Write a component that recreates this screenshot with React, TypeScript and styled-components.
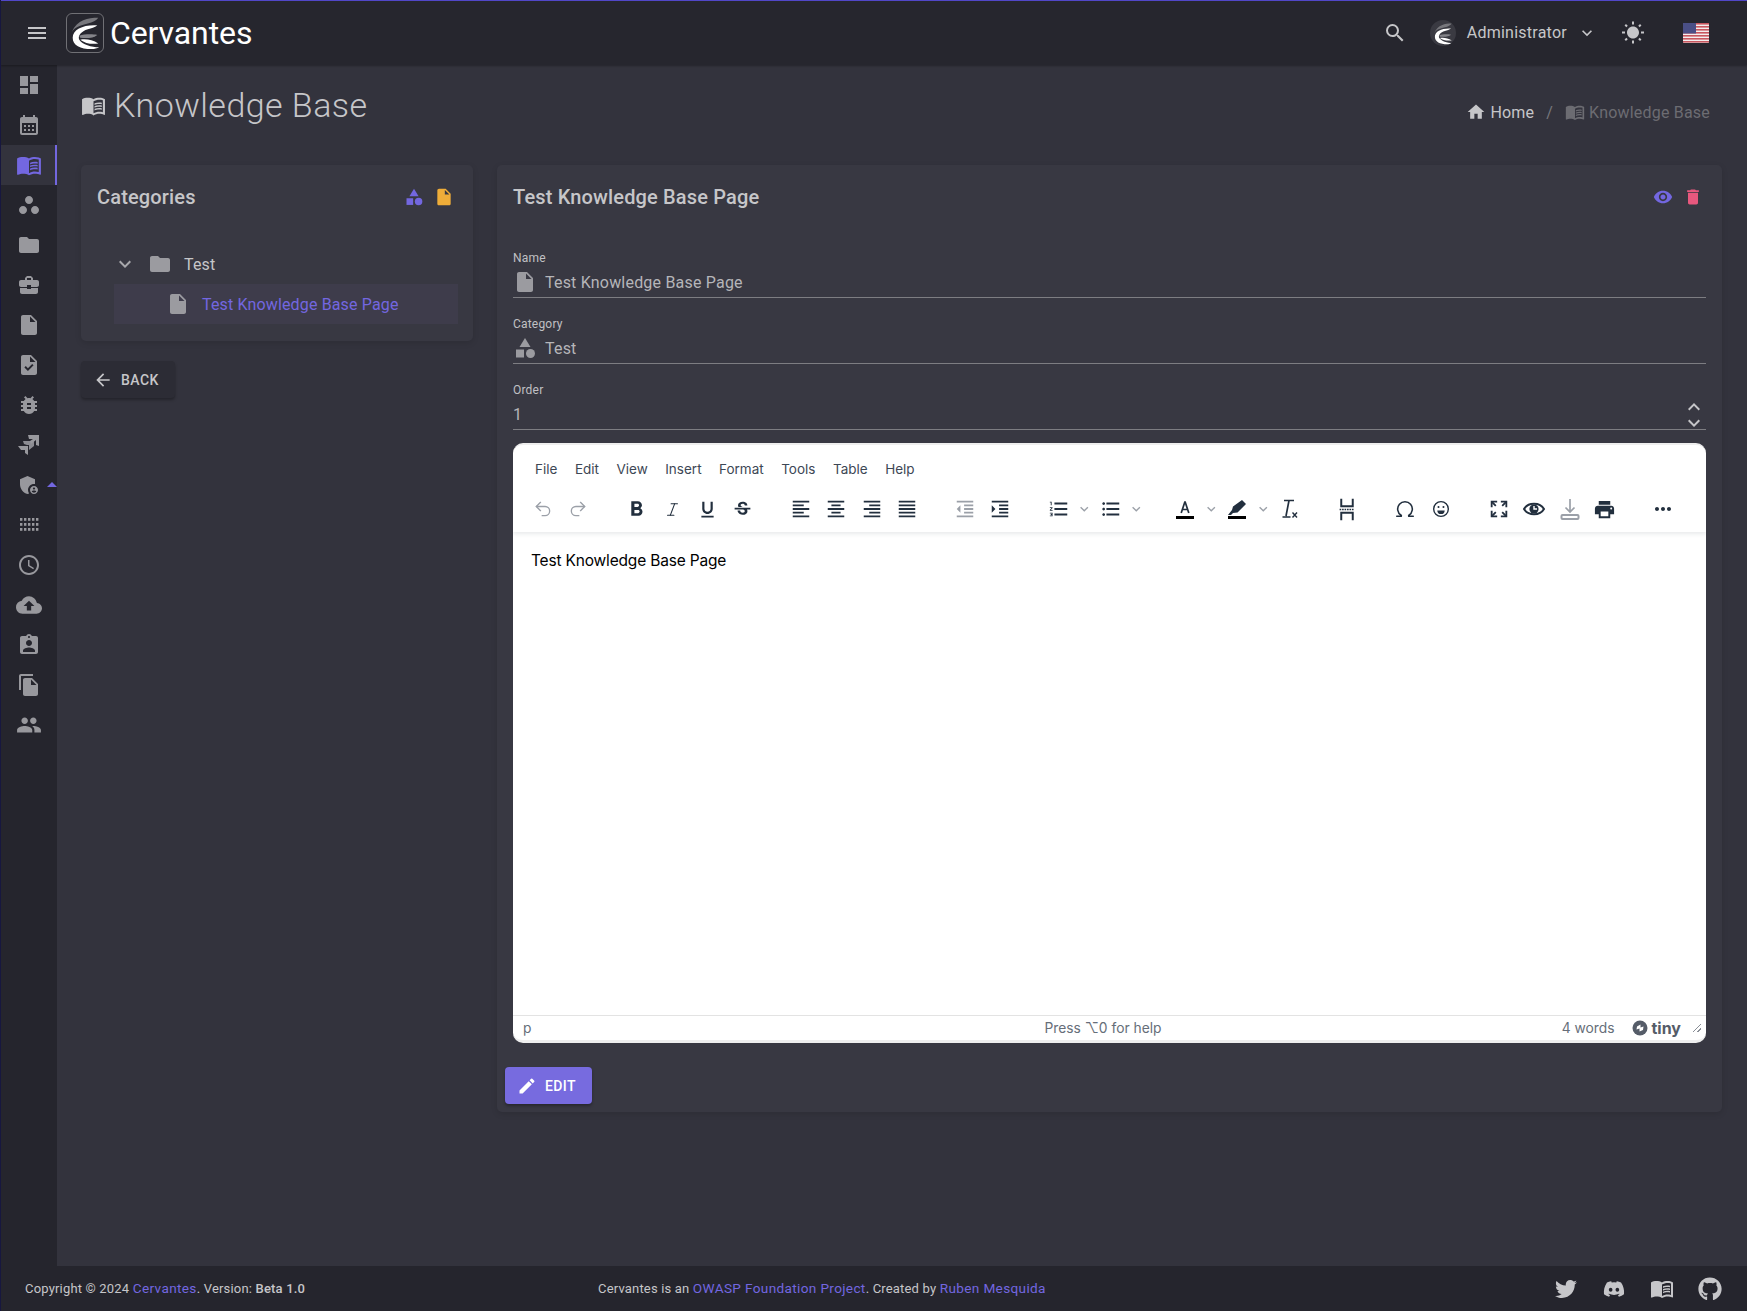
import React from "react";
import styled, { createGlobalStyle } from "styled-components";
import {
  MdAccessTime,
  MdAdminPanelSettings,
  MdArrowBack,
  MdAssignmentInd,
  MdBugReport,
  MdBusinessCenter,
  MdCalendarMonth,
  MdCategory,
  MdCloudUpload,
  MdDashboard,
  MdDelete,
  MdEdit,
  MdExpandMore,
  MdFileCopy,
  MdFolder,
  MdFormatAlignCenter,
  MdFormatAlignJustify,
  MdFormatAlignLeft,
  MdFormatAlignRight,
  MdFormatBold,
  MdFormatIndentDecrease,
  MdFormatIndentIncrease,
  MdFormatListBulleted,
  MdFormatListNumbered,
  MdFormatUnderlined,
  MdHome,
  MdInsertDriveFile,
  MdKeyboardArrowDown,
  MdKeyboardArrowUp,
  MdMenu,
  MdMenuBook,
  MdMoreHoriz,
  MdPeople,
  MdPrint,
  MdSearch,
  MdStrikethroughS,
  MdTask,
  MdVisibility,
  MdWbSunny,
  MdWorkspaces,
} from "react-icons/md";
import { FaDiscord, FaGithub, FaTwitter } from "react-icons/fa";
import { Italic, Omega, Redo2, Undo2 } from "lucide-react";

const GlobalStyle = createGlobalStyle`
  html, body {
    margin: 0;
    padding: 0;
    background: #33333d;
  }
  * {
    box-sizing: border-box;
  }
  p, h1, h2 {
    margin: 0;
    font-weight: inherit;
  }
`;

const PURPLE = "#7367e0";

const LogoMark = ({ width, height }: { width: number; height: number }) => (
  <svg width={width} height={height} viewBox="0 0 38 40">
    <path d="M33 4 C22 4 11 6 5 19 C8 14 14 12 22 10 C27 9 31 7 33 4Z" fill="#77777c" />
    <path d="M32 12 C18 11 6 16 6 25 C6 33 14 37 26 37 C29 37 32 36 34 35 C26 35 16 32 13 27 C11 23 15 18 22 16 C26 15 29 14 32 12Z" fill="#fff" />
    <path d="M13 23 C18 21 27 21 32 22 C28 25 22 26 14 25Z" fill="#85858a" />
    <path d="M14 27 C20 26 27 27 33 31 C26 32 19 31 14 27Z" fill="#fff" />
  </svg>
);

const StackedArrows = () => (
  <svg width="24" height="24" viewBox="0 0 24 24" fill="currentColor">
    <path d="M11 2h11v11l-3-1V7l-5 4-1-3 3-2h-4z" />
    <path d="M6 8h11v5l-5 4v-5h-2l-3-1z" opacity="0.9" />
    <path d="M1 13h10v9l-3-2v-3l-4 0z" />
  </svg>
);

const DotGrid = () => (
  <svg width="20" height="16" viewBox="0 0 20 16" fill="currentColor">
    {[1, 6, 11].map((y) =>
      [1, 5, 9, 13, 17].map((x) => <rect key={`${x}-${y}`} x={x} y={y} width="2.4" height="2.8" />)
    )}
  </svg>
);

const Flag = () => (
  <svg width="26" height="20" viewBox="0 0 26 20">
    <rect width="26" height="20" rx="1" fill="#f3eeee" />
    {[0, 3, 6, 9, 12, 15, 18].map((y) => (
      <rect key={y} y={y} width="26" height="1.6" fill="#c8575f" />
    ))}
    <rect width="13" height="10.5" fill="#4a4f86" />
  </svg>
);

const TextColorIcon = () => (
  <svg width="24" height="24" viewBox="0 0 24 24">
    <path d="M12 4.500 L8.200 16 M12 4.500 L15.800 16 M9.400 12.500 H14.600" fill="none" stroke="#222f3e" strokeWidth="1.700" />
    <rect x="3" y="19" width="18" height="3" fill="#000" />
  </svg>
);

const HighlightIcon = () => (
  <svg width="24" height="24" viewBox="0 0 24 24">
    <path d="M17 3l4 4-8.500 8.500L8 16l-2 2H3l4-5 1-3.500z" fill="#222f3e" />
    <rect x="3" y="19" width="18" height="3" fill="#000" />
  </svg>
);

const ClearFormatIcon = () => (
  <svg width="24" height="24" viewBox="0 0 24 24" fill="none" stroke="#222f3e">
    <path d="M7 3.500h10M12 3.500 L9 19M5.500 20h8" strokeWidth="1.700" />
    <path d="M15.500 15.500l4.500 5M20 15.500l-4.500 5" strokeWidth="1.400" />
  </svg>
);

const PageBreakIcon = () => (
  <svg width="20" height="23" viewBox="0 0 24 28" fill="none" stroke="#222f3e" strokeWidth="2.400">
    <path d="M5 1v9h14V1M5 27v-9h14v9" />
    <path d="M3 14h18" strokeWidth="1.600" strokeDasharray="2 1" />
  </svg>
);

const EmojiIcon = () => (
  <svg width="22" height="22" viewBox="0 0 24 24" fill="none" stroke="#222f3e" strokeWidth="1.500">
    <circle cx="12" cy="12" r="8" />
    <circle cx="9.300" cy="9.800" r="1.100" fill="#222f3e" stroke="none" />
    <circle cx="14.700" cy="9.800" r="1.100" fill="#222f3e" stroke="none" />
    <path d="M8 13.500h8a4 4 0 0 1-8 0z" fill="#222f3e" stroke="none" />
  </svg>
);

const PreviewIcon = () => (
  <svg width="24" height="24" viewBox="0 0 24 24">
    <path d="M2 12 C6 5 18 5 22 12 C18 19 6 19 2 12Z" fill="none" stroke="#222f3e" strokeWidth="2" />
    <circle cx="12" cy="12" r="4.600" fill="#222f3e" />
    <path d="M12 9v3h3" stroke="#fff" strokeWidth="1.400" fill="none" />
  </svg>
);

const SaveIcon = () => (
  <svg width="24" height="24" viewBox="0 0 24 24" fill="none" stroke="#9ba0a8">
    <path d="M12 2v13M7.500 10.500 12 15l4.500-4.500" strokeWidth="1.700" />
    <rect x="3.500" y="18" width="17" height="4" rx="1" strokeWidth="2" />
  </svg>
);

const FullscreenIcon = () => (
  <svg width="22" height="22" viewBox="0 0 24 24" fill="none" stroke="#222f3e" strokeWidth="2">
    <path d="M4 10V4h6M20 10V4h-6M4 14v6h6M20 14v6h-6" />
    <path d="M4.500 4.500l4 4M19.500 4.500l-4 4M4.500 19.500l4-4M19.500 19.500l-4-4" />
  </svg>
);

const TinyLogo = () => (
  <svg width="16" height="16" viewBox="0 0 16 16">
    <circle cx="8" cy="8" r="7.500" fill="#555c68" />
    <path d="M5 6.500 8.500 4.500v3l3-1-.5 3.500-3.500 1.500v-3l-3 1z" fill="#fff" />
  </svg>
);

const Page = styled.div`
  width: 1747px;
  height: 1311px;
  display: flex;
  flex-direction: column;
  background: #33333d;
  border-left: 1px solid #17173f;
  font-family: Roboto, "Liberation Sans", sans-serif;
  color: #c6c6c9;
  overflow: hidden;
`;

const TopBar = styled.header`
  height: 65px;
  flex: none;
  display: flex;
  align-items: center;
  background: #26262e;
  border-top: 1px solid #5147c9;
  padding: 0 38px 0 24px;
  box-shadow: 0 1px 2px rgba(0, 0, 0, 0.3);
  position: relative;
  z-index: 2;
`;

const Burger = styled.div`
  display: flex;
  color: #c6c6c9;
  margin-right: 17px;
`;

const LogoBox = styled.div`
  width: 38px;
  height: 40px;
  display: flex;
  align-items: center;
  justify-content: center;
  border: 1px solid #707075;
  border-radius: 6px;
  margin-right: 6px;
`;

const Brand = styled.span`
  font-size: 32px;
  color: #fff;
  letter-spacing: -0.1px;
`;

const TopActions = styled.div`
  margin-left: auto;
  display: flex;
  align-items: center;
  color: #c6c6c9;
`;

const Avatar = styled.div`
  width: 26px;
  height: 26px;
  border-radius: 50%;
  background: #3a3a42;
  display: flex;
  align-items: center;
  justify-content: center;
  margin: 0 11px 0 23px;
  overflow: hidden;
`;

const UserName = styled.span`
  font-size: 16px;
  letter-spacing: 0.25px;
  padding-bottom: 2px;
`;

const UserCaret = styled.div`
  display: flex;
  margin: 0 24px 0 10px;
`;

const FlagBox = styled.div`
  display: flex;
  margin-left: 38px;
`;

const Body = styled.div`
  flex: 1;
  min-height: 0;
  display: flex;
`;

const SideBar = styled.nav`
  width: 56px;
  flex: none;
  background: #25252d;
  display: flex;
  flex-direction: column;
`;

const SideItem = styled.div<{ $active?: boolean }>`
  height: 40px;
  display: flex;
  align-items: center;
  justify-content: center;
  position: relative;
  color: ${(p) => (p.$active ? PURPLE : "#98989d")};
  background: ${(p) => (p.$active ? "#33333d" : "transparent")};
  border-right: ${(p) => (p.$active ? `2px solid ${PURPLE}` : "none")};
  padding-left: ${(p) => (p.$active ? "2px" : "0")};
`;

const SideCaret = styled.span`
  position: absolute;
  right: 0;
  top: 17px;
  width: 0;
  height: 0;
  border-left: 5px solid transparent;
  border-right: 5px solid transparent;
  border-bottom: 5px solid ${PURPLE};
`;

const Main = styled.main`
  flex: 1;
  min-width: 0;
  padding: 0 25px 0 24px;
`;

const PageHead = styled.div`
  height: 100px;
  display: flex;
  align-items: center;
  padding-bottom: 20px;
`;

const PageTitle = styled.h1`
  font-size: 34px;
  font-weight: 300;
  margin-left: 8px;
  letter-spacing: 0.45px;
  color: #c6c6c9;
`;

const TitleIcon = styled.div`
  display: flex;
  color: #c6c6c9;
`;

const Crumbs = styled.div`
  margin-left: auto;
  display: flex;
  align-items: center;
  font-size: 16px;
  letter-spacing: 0.2px;
  padding: 14px 12px 0 0;
`;

const Crumb = styled.span<{ $muted?: boolean }>`
  display: flex;
  align-items: center;
  gap: 4px;
  color: ${(p) => (p.$muted ? "#6c6c72" : "#c6c6c9")};
`;

const Sep = styled.span`
  margin: 0 12px;
  color: #77777c;
`;

const Columns = styled.div`
  display: grid;
  grid-template-columns: 392px 1fr;
  gap: 24px;
  align-items: start;
`;

const LeftColumn = styled.div`
  display: flex;
  flex-direction: column;
  align-items: flex-start;
  gap: 20px;
`;

const Card = styled.section`
  width: 100%;
  background: #383842;
  border-radius: 5px;
  padding: 16px;
  box-shadow: 0 2px 6px rgba(0, 0, 0, 0.12);
`;

const CardHead = styled.div`
  height: 32px;
  display: flex;
  align-items: center;
  justify-content: space-between;
`;

const CardTitle = styled.h2`
  font-size: 20px;
  font-weight: 500;
  letter-spacing: 0.15px;
  color: #c6c6c9;
`;

const HeadIcons = styled.div`
  display: flex;
  align-items: center;
  gap: 10px;
  padding-right: 3px;
`;

const Tint = styled.span<{ $color: string }>`
  display: flex;
  color: ${(p) => p.$color};
`;

const Tree = styled.div`
  margin: 31px -1px 1px 17px;
`;

const TreeRow = styled.div<{ $selected?: boolean }>`
  height: 40px;
  display: flex;
  align-items: center;
  font-size: 16px;
  letter-spacing: 0.15px;
  padding-left: ${(p) => (p.$selected ? "52px" : "0")};
  background: ${(p) => (p.$selected ? "#3e3c4b" : "transparent")};
  color: ${(p) => (p.$selected ? PURPLE : "#c6c6c9")};
`;

const TreeCaret = styled.span`
  display: flex;
  color: #a8a8ac;
  margin: 0 11px 0 -1px;
`;

const TreeIcon = styled.span<{ $gap: number }>`
  display: flex;
  color: #9b9ba0;
  margin-right: ${(p) => p.$gap}px;
`;

const BackButton = styled.div`
  width: 94px;
  height: 37px;
  display: flex;
  align-items: center;
  gap: 8px;
  padding-left: 12px;
  background: #2c2c35;
  border-radius: 4px;
  font-size: 14px;
  font-weight: 500;
  letter-spacing: 0.45px;
  color: #c6c6c9;
  box-shadow: 0 2px 3px rgba(0, 0, 0, 0.3);
`;

const Fields = styled.div`
  margin-top: 38px;
  display: flex;
  flex-direction: column;
  gap: 19px;
`;

const Field = styled.div`
  height: 47px;
  border-bottom: 1px solid #7d7d82;
  position: relative;
`;

const FieldLabel = styled.label`
  display: block;
  font-size: 12px;
  line-height: 14px;
  letter-spacing: 0.2px;
  color: #c0c0c4;
  margin-bottom: 1px;
`;

const FieldValue = styled.div`
  display: flex;
  align-items: center;
  height: 32px;
  font-size: 16px;
  letter-spacing: 0.2px;
  color: #b5b5b9;
`;

const FieldIcon = styled.span`
  display: flex;
  width: 32px;
  color: #9b9ba0;
`;

const Spinner = styled.div`
  position: absolute;
  right: 0;
  top: 16px;
  display: flex;
  flex-direction: column;
  color: #c6c6c9;

  svg {
    margin: -4px 0;
  }
`;

const Editor = styled.div`
  margin-top: 13px;
  height: 600px;
  display: flex;
  flex-direction: column;
  background: #fff;
  border-radius: 10px;
  border: 2px solid #eeeeee;
  border-width: 2px 0 3px 0;
  overflow: hidden;
  font-family: Inter, "Liberation Sans", sans-serif;
  color: #222f3e;
`;

const EditorHead = styled.div`
  flex: none;
  height: 87px;
  box-shadow: 0 2px 4px rgba(34, 47, 62, 0.1);
  position: relative;
`;

const MenuBar = styled.div`
  display: flex;
  align-items: center;
  gap: 17.5px;
  height: 47px;
  padding-left: 22px;
  font-size: 13.5px;
  color: #3d4755;
`;

const ToolBar = styled.div`
  display: flex;
  align-items: center;
  height: 34px;
  padding-left: 12.5px;
`;

const ToolGroup = styled.div`
  display: flex;
  align-items: center;
  margin-right: 23px;
`;

const ToolButton = styled.span<{ $muted?: boolean }>`
  width: 35.3px;
  height: 30px;
  display: flex;
  align-items: center;
  justify-content: center;
  color: ${(p) => (p.$muted ? "#9ba0a8" : "#222f3e")};
`;

const ToolCaret = styled.span`
  width: 16.5px;
  display: flex;
  justify-content: center;
  color: #9ba0a8;
`;

const EditorContent = styled.div`
  flex: 1;
  padding: 17px 18px;
  font-size: 15.5px;
  letter-spacing: -0.18px;
  line-height: 24px;
  color: #000;
`;

const StatusBar = styled.div`
  flex: none;
  height: 25px;
  display: grid;
  grid-template-columns: 1fr auto 1fr;
  align-items: center;
  border-top: 1px solid #e3e3e3;
  padding: 0 23px 0 10px;
  font-size: 13.8px;
  color: #666e79;
`;

const StatusRight = styled.div`
  display: flex;
  align-items: center;
  justify-content: flex-end;
  gap: 18px;
  margin-right: -18px;
`;

const TinyBrand = styled.span`
  display: flex;
  align-items: center;
  gap: 3px;
  font-size: 16px;
  font-weight: 700;
  color: #555c68;
`;

const ResizeGrip = styled.span`
  width: 8px;
  height: 8px;
  margin-left: -6px;
  background: linear-gradient(
    135deg,
    transparent 0 45%,
    #8a8f97 45% 55%,
    transparent 55% 72%,
    #8a8f97 72% 82%,
    transparent 82%
  );
`;

const EditButton = styled.div`
  margin: 24px 0 -8px -8px;
  width: 87px;
  height: 37px;
  display: flex;
  align-items: center;
  gap: 8px;
  padding-left: 12px;
  background: #776bdf;
  border-radius: 4px;
  font-size: 14px;
  font-weight: 500;
  letter-spacing: 0.4px;
  color: #fff;
  box-shadow: 0 2px 3px rgba(0, 0, 0, 0.3);
`;

const Footer = styled.footer`
  height: 45px;
  flex: none;
  display: grid;
  grid-template-columns: 573px auto 1fr;
  align-items: center;
  padding: 0 25px;
  margin-left: -1px;
  background: #25252d;
  font-size: 13px;
  letter-spacing: 0.18px;
  color: #c6c6c9;

  a {
    color: ${PURPLE};
    text-decoration: none;
    font-size: 13.6px;
    letter-spacing: 0.35px;
  }
  b {
    font-weight: 500;
  }
  > span {
    padding-bottom: 2px;
  }
`;

const FooterIcons = styled.div`
  display: flex;
  align-items: center;
  justify-content: flex-end;
  gap: 24px;
  color: #c6c6c9;
`;

const FooterIcon = styled.span`
  width: 24px;
  display: flex;
  justify-content: center;
`;

const sideIcons = [
  <MdDashboard size={24} />,
  <MdCalendarMonth size={24} />,
  <MdMenuBook size={26} />,
  <MdWorkspaces size={24} />,
  <MdFolder size={24} />,
  <MdBusinessCenter size={24} />,
  <MdInsertDriveFile size={24} />,
  <MdTask size={24} />,
  <MdBugReport size={24} />,
  <StackedArrows />,
  <MdAdminPanelSettings size={24} />,
  <DotGrid />,
  <MdAccessTime size={24} />,
  <MdCloudUpload size={26} />,
  <MdAssignmentInd size={24} />,
  <MdFileCopy size={24} />,
  <MdPeople size={26} />,
];

const menus = ["File", "Edit", "View", "Insert", "Format", "Tools", "Table", "Help"];

const App = () => {
  return (
    <Page>
      <GlobalStyle />
      <TopBar>
        <Burger>
          <MdMenu size={24} />
        </Burger>
        <LogoBox>
          <LogoMark width={36} height={38} />
        </LogoBox>
        <Brand>Cervantes</Brand>
        <TopActions>
          <MdSearch size={24} />
          <Avatar>
            <LogoMark width={24} height={25} />
          </Avatar>
          <UserName>Administrator</UserName>
          <UserCaret>
            <MdExpandMore size={20} />
          </UserCaret>
          <MdWbSunny size={24} />
          <FlagBox>
            <Flag />
          </FlagBox>
        </TopActions>
      </TopBar>
      <Body>
        <SideBar>
          {sideIcons.map((icon, i) => (
            <SideItem key={i} $active={i === 2}>
              {icon}
              {i === 10 && <SideCaret />}
            </SideItem>
          ))}
        </SideBar>
        <Main>
          <PageHead>
            <TitleIcon>
              <MdMenuBook size={25} />
            </TitleIcon>
            <PageTitle>Knowledge Base</PageTitle>
            <Crumbs>
              <Crumb>
                <MdHome size={20} />
                Home
              </Crumb>
              <Sep>/</Sep>
              <Crumb $muted>
                <MdMenuBook size={20} />
                Knowledge Base
              </Crumb>
            </Crumbs>
          </PageHead>
          <Columns>
            <LeftColumn>
              <Card>
                <CardHead>
                  <CardTitle>Categories</CardTitle>
                  <HeadIcons>
                    <Tint $color={PURPLE}>
                      <MdCategory size={20} />
                    </Tint>
                    <Tint $color="#efad39">
                      <MdInsertDriveFile size={20} />
                    </Tint>
                  </HeadIcons>
                </CardHead>
                <Tree>
                  <TreeRow>
                    <TreeCaret>
                      <MdExpandMore size={24} />
                    </TreeCaret>
                    <TreeIcon $gap={12}>
                      <MdFolder size={24} />
                    </TreeIcon>
                    Test
                  </TreeRow>
                  <TreeRow $selected>
                    <TreeIcon $gap={12}>
                      <MdInsertDriveFile size={24} />
                    </TreeIcon>
                    Test Knowledge Base Page
                  </TreeRow>
                </Tree>
              </Card>
              <BackButton>
                <MdArrowBack size={20} />
                BACK
              </BackButton>
            </LeftColumn>
            <Card>
              <CardHead>
                <CardTitle>Test Knowledge Base Page</CardTitle>
                <HeadIcons>
                  <Tint $color={PURPLE}>
                    <MdVisibility size={20} />
                  </Tint>
                  <Tint $color="#e8587e">
                    <MdDelete size={20} />
                  </Tint>
                </HeadIcons>
              </CardHead>
              <Fields>
                <Field>
                  <FieldLabel>Name</FieldLabel>
                  <FieldValue>
                    <FieldIcon>
                      <MdInsertDriveFile size={24} />
                    </FieldIcon>
                    Test Knowledge Base Page
                  </FieldValue>
                </Field>
                <Field>
                  <FieldLabel>Category</FieldLabel>
                  <FieldValue>
                    <FieldIcon>
                      <MdCategory size={24} />
                    </FieldIcon>
                    Test
                  </FieldValue>
                </Field>
                <Field>
                  <FieldLabel>Order</FieldLabel>
                  <FieldValue>1</FieldValue>
                  <Spinner>
                    <MdKeyboardArrowUp size={24} />
                    <MdKeyboardArrowDown size={24} />
                  </Spinner>
                </Field>
              </Fields>
              <Editor>
                <EditorHead>
                  <MenuBar>
                    {menus.map((m) => (
                      <span key={m}>{m}</span>
                    ))}
                  </MenuBar>
                  <ToolBar>
                    <ToolGroup>
                      <ToolButton $muted>
                        <Undo2 size={20} strokeWidth={1.6} />
                      </ToolButton>
                      <ToolButton $muted>
                        <Redo2 size={20} strokeWidth={1.6} />
                      </ToolButton>
                    </ToolGroup>
                    <ToolGroup>
                      <ToolButton>
                        <MdFormatBold size={25} />
                      </ToolButton>
                      <ToolButton>
                        <Italic size={17} strokeWidth={1.5} />
                      </ToolButton>
                      <ToolButton>
                        <MdFormatUnderlined size={21} />
                      </ToolButton>
                      <ToolButton>
                        <MdStrikethroughS size={21} />
                      </ToolButton>
                    </ToolGroup>
                    <ToolGroup>
                      <ToolButton>
                        <MdFormatAlignLeft size={22} />
                      </ToolButton>
                      <ToolButton>
                        <MdFormatAlignCenter size={22} />
                      </ToolButton>
                      <ToolButton>
                        <MdFormatAlignRight size={22} />
                      </ToolButton>
                      <ToolButton>
                        <MdFormatAlignJustify size={22} />
                      </ToolButton>
                    </ToolGroup>
                    <ToolGroup>
                      <ToolButton $muted>
                        <MdFormatIndentDecrease size={22} />
                      </ToolButton>
                      <ToolButton>
                        <MdFormatIndentIncrease size={22} />
                      </ToolButton>
                    </ToolGroup>
                    <ToolGroup>
                      <ToolButton>
                        <MdFormatListNumbered size={22} />
                      </ToolButton>
                      <ToolCaret>
                        <MdExpandMore size={20} />
                      </ToolCaret>
                      <ToolButton>
                        <MdFormatListBulleted size={22} />
                      </ToolButton>
                      <ToolCaret>
                        <MdExpandMore size={20} />
                      </ToolCaret>
                    </ToolGroup>
                    <ToolGroup>
                      <ToolButton>
                        <TextColorIcon />
                      </ToolButton>
                      <ToolCaret>
                        <MdExpandMore size={20} />
                      </ToolCaret>
                      <ToolButton>
                        <HighlightIcon />
                      </ToolButton>
                      <ToolCaret>
                        <MdExpandMore size={20} />
                      </ToolCaret>
                      <ToolButton>
                        <ClearFormatIcon />
                      </ToolButton>
                    </ToolGroup>
                    <ToolGroup>
                      <ToolButton>
                        <PageBreakIcon />
                      </ToolButton>
                    </ToolGroup>
                    <ToolGroup>
                      <ToolButton>
                        <Omega size={22} strokeWidth={1.7} />
                      </ToolButton>
                      <ToolButton>
                        <EmojiIcon />
                      </ToolButton>
                    </ToolGroup>
                    <ToolGroup>
                      <ToolButton>
                        <FullscreenIcon />
                      </ToolButton>
                      <ToolButton>
                        <PreviewIcon />
                      </ToolButton>
                      <ToolButton>
                        <SaveIcon />
                      </ToolButton>
                      <ToolButton>
                        <MdPrint size={23} />
                      </ToolButton>
                    </ToolGroup>
                    <ToolGroup>
                      <ToolButton>
                        <MdMoreHoriz size={24} />
                      </ToolButton>
                    </ToolGroup>
                  </ToolBar>
                </EditorHead>
                <EditorContent>Test Knowledge Base Page</EditorContent>
                <StatusBar>
                  <span>p</span>
                  <span>Press ⌥0 for help</span>
                  <StatusRight>
                    <span>4 words</span>
                    <TinyBrand>
                      <TinyLogo />
                      tiny
                    </TinyBrand>
                    <ResizeGrip />
                  </StatusRight>
                </StatusBar>
              </Editor>
              <EditButton>
                <MdEdit size={20} />
                EDIT
              </EditButton>
            </Card>
          </Columns>
        </Main>
      </Body>
      <Footer>
        <span>
          Copyright © 2024 <a>Cervantes</a>. Version: <b>Beta 1.0</b>
        </span>
        <span>
          Cervantes is an <a>OWASP Foundation Project</a>. Created by <a>Ruben Mesquida</a>
        </span>
        <FooterIcons>
          <FooterIcon>
            <FaTwitter size={22} />
          </FooterIcon>
          <FooterIcon>
            <FaDiscord size={22} />
          </FooterIcon>
          <FooterIcon>
            <MdMenuBook size={25} />
          </FooterIcon>
          <FooterIcon>
            <FaGithub size={24} />
          </FooterIcon>
        </FooterIcons>
      </Footer>
    </Page>
  );
};

export default App;
